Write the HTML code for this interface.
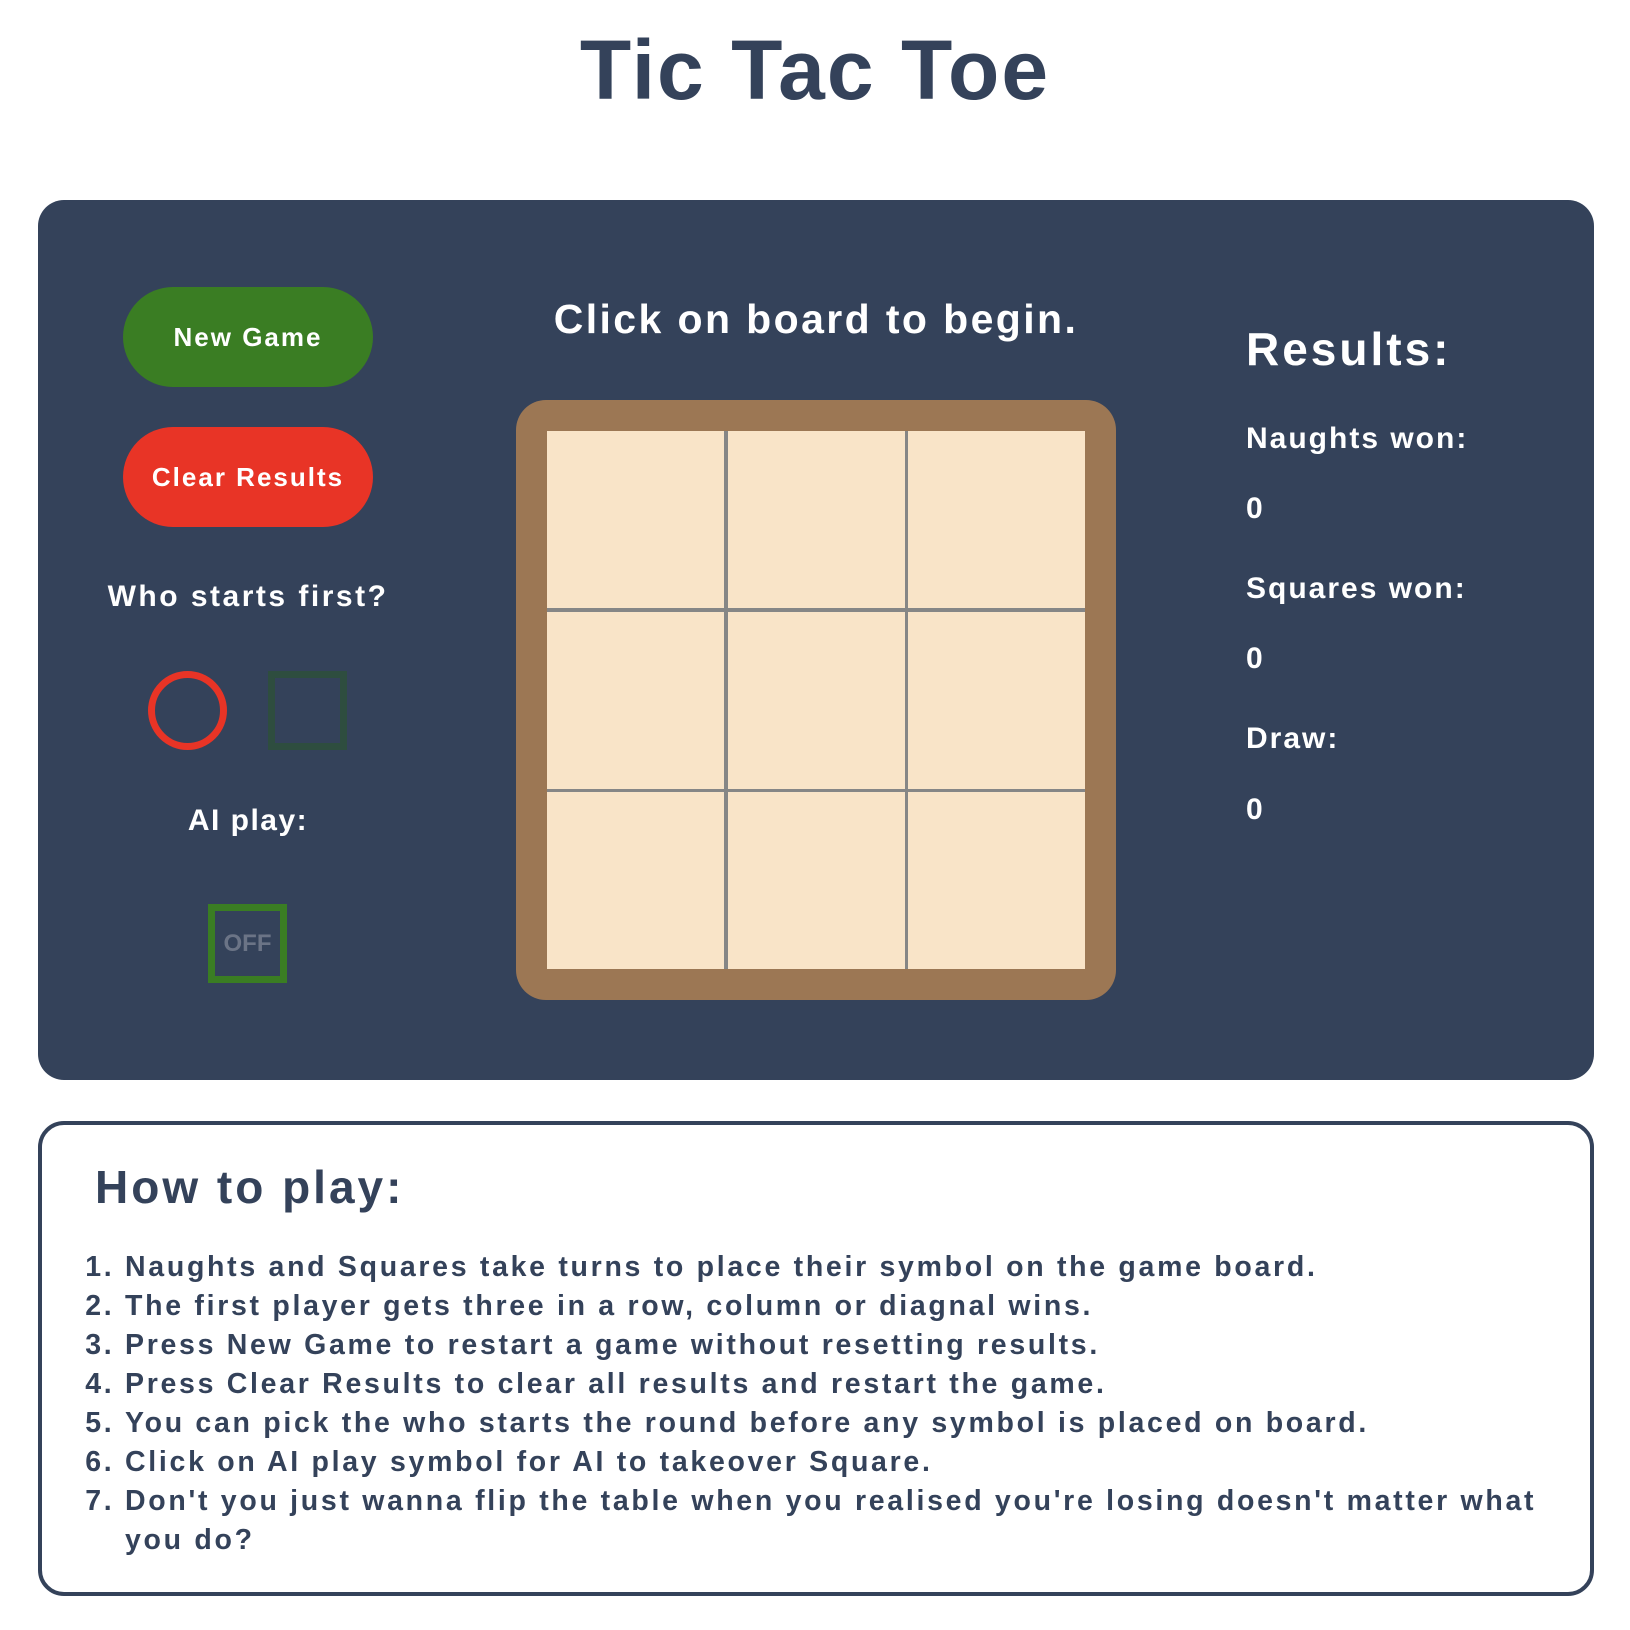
<!DOCTYPE html>
<html><head><meta charset="utf-8"><style>
*{margin:0;padding:0;box-sizing:border-box}
body{width:1630px;height:1630px;background:#fff;font-family:"Liberation Sans",sans-serif;font-weight:bold;color:#34425a;position:relative;overflow:hidden}
.a{position:absolute}
h1{position:absolute;left:0;width:1630px;text-align:center;top:22px;font-size:84px;letter-spacing:2px}
.panel{left:38px;top:200px;width:1556px;height:880px;background:#34425a;border-radius:26px}
.btn{left:123px;width:250px;height:100px;border-radius:50px;color:#fff;font-size:26px;text-align:center;line-height:100px;letter-spacing:2px}
.w{color:#fff}
.board{left:516px;top:400px;width:600px;height:600px;background:#9c7754;border-radius:30px}
.grid{left:547px;top:431px;width:538px;height:538px;background:#868686;display:grid;grid-template-columns:177px 177px 177px;grid-template-rows:177px 177px 177px;gap:3.5px}
.grid div{background:#f9e4c8}
.how{left:38px;top:1121px;width:1556px;height:475px;border:4px solid #34425a;border-radius:26px}
ol{position:absolute;left:125px;top:1248px;font-size:28.5px;line-height:39px;width:1460px;letter-spacing:2.7px}
.r{letter-spacing:2px}
</style></head><body>
<h1>Tic Tac Toe</h1>
<div class="a panel"></div>
<div class="a btn" style="top:287px;background:#3a7d23">New Game</div>
<div class="a btn" style="top:427px;background:#e83426">Clear Results</div>
<div class="a w" style="left:48px;width:400px;text-align:center;top:580px;font-size:30px;letter-spacing:2.5px">Who starts first?</div>
<div class="a" style="left:148px;top:671px;width:79px;height:79px;border:7px solid #e83426;border-radius:50%"></div>
<div class="a" style="left:268px;top:671px;width:79px;height:79px;border:7px solid #2e4d3f"></div>
<div class="a w" style="left:48px;width:400px;text-align:center;top:804px;font-size:30px;letter-spacing:1.5px">AI play:</div>
<div class="a" style="left:208px;top:904px;width:79px;height:79px;border:7px solid #3a7d23;color:#6b7486;font-size:24px;text-align:center;line-height:65px">OFF</div>
<div class="a w" style="left:516px;width:600px;text-align:center;top:296px;font-size:41px;letter-spacing:2.4px">Click on board to begin.</div>
<div class="a board"></div>
<div class="a grid"><div></div><div></div><div></div><div></div><div></div><div></div><div></div><div></div><div></div></div>
<div class="a w" style="left:1246px;top:322px;font-size:46px;letter-spacing:3px">Results:</div>
<div class="a w r" style="left:1246px;top:422px;font-size:30px">Naughts won:</div>
<div class="a w" style="left:1246px;top:492px;font-size:30px">0</div>
<div class="a w r" style="left:1246px;top:572px;font-size:30px">Squares won:</div>
<div class="a w" style="left:1246px;top:642px;font-size:30px">0</div>
<div class="a w r" style="left:1246px;top:722px;font-size:30px">Draw:</div>
<div class="a w" style="left:1246px;top:793px;font-size:30px">0</div>
<div class="a how"></div>
<div class="a" style="left:95px;top:1160px;font-size:46px;letter-spacing:3px">How to play:</div>
<ol>
<li>Naughts and Squares take turns to place their symbol on the game board.</li>
<li>The first player gets three in a row, column or diagnal wins.</li>
<li>Press New Game to restart a game without resetting results.</li>
<li>Press Clear Results to clear all results and restart the game.</li>
<li>You can pick the who starts the round before any symbol is placed on board.</li>
<li>Click on AI play symbol for AI to takeover Square.</li>
<li>Don't you just wanna flip the table when you realised you're losing doesn't matter what you do?</li>
</ol>
</body></html>
